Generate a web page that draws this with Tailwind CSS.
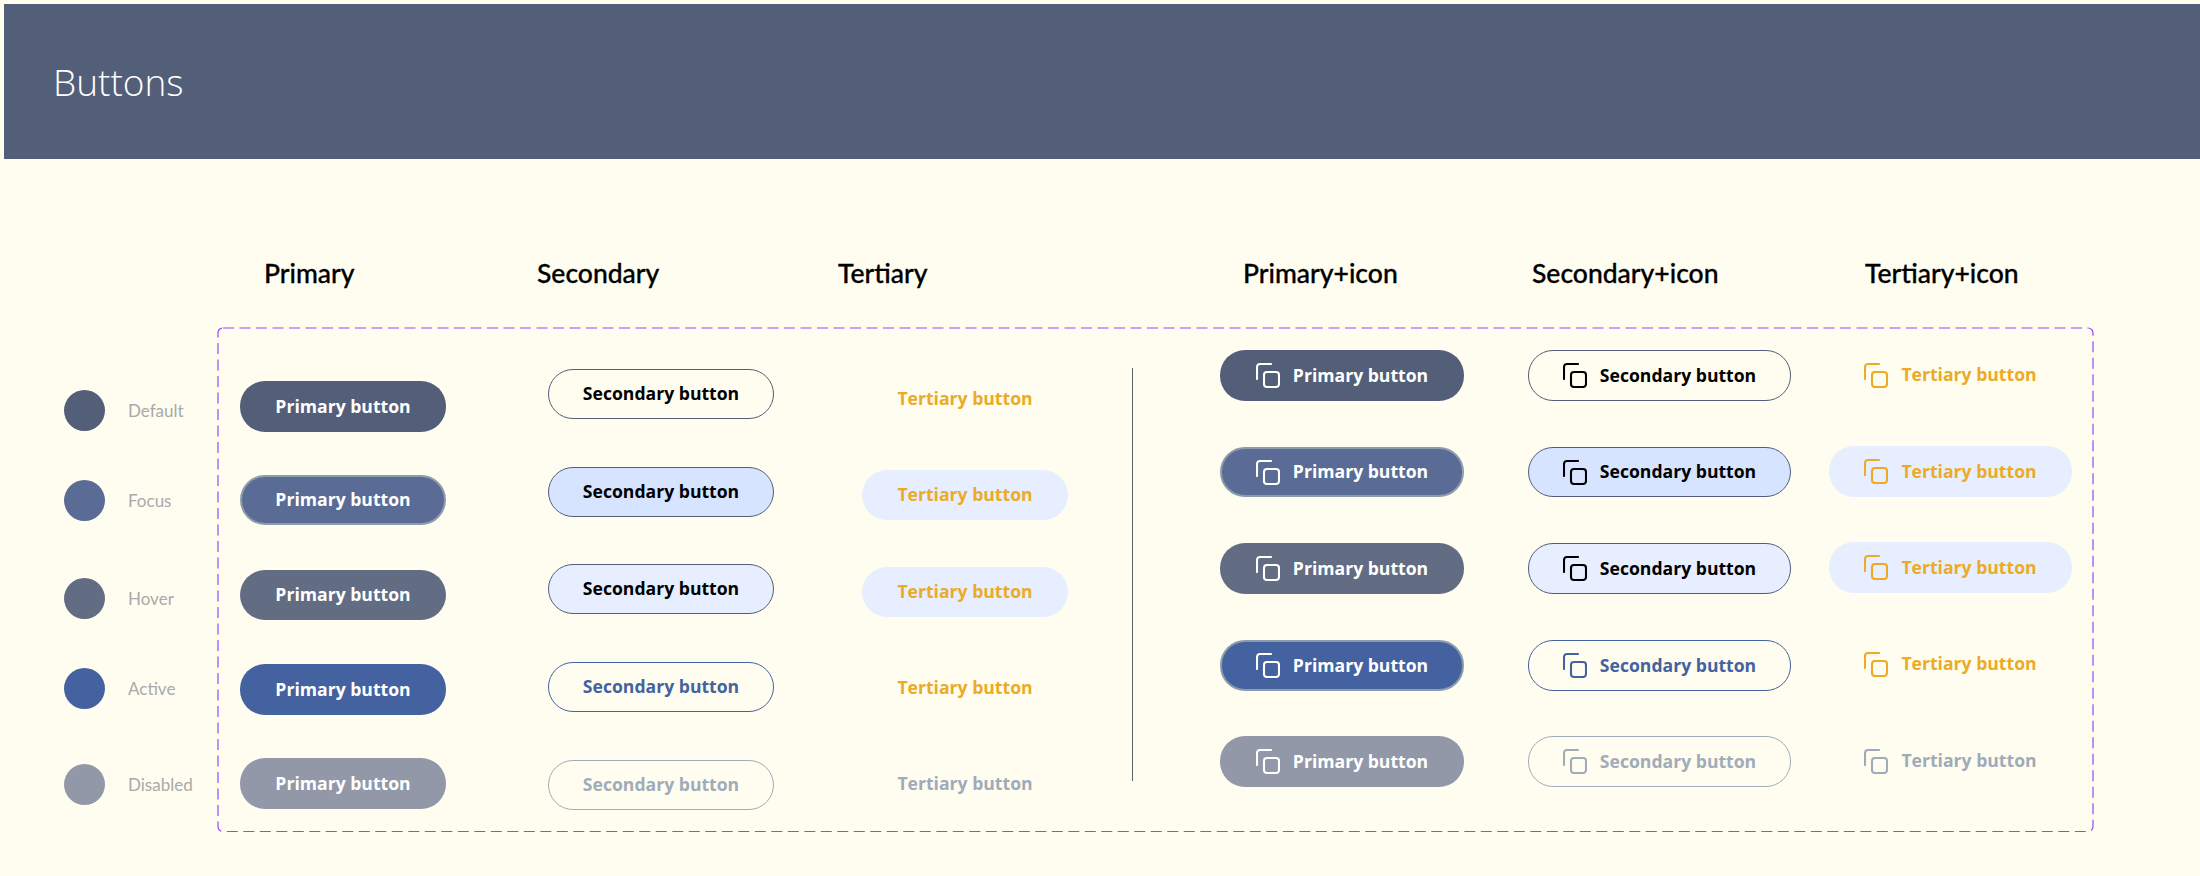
<!DOCTYPE html>
<html lang="en">

<head>
    <meta charset="UTF-8">
    <title>Buttons</title>
    <script src="https://cdn.jsdelivr.net/npm/@tailwindcss/browser@4"></script>
</head>

<body class="bg-[#fffdf0] h-[876px] overflow-hidden pt-[4px] font-['Open_Sans',sans-serif]">
    <svg class="hidden">
        <symbol id="copy" viewBox="0 0 24 25" fill="none" stroke="currentColor" stroke-width="2.1" stroke-linecap="round">
            <path d="M1 16V4a3 3 0 0 1 3-3h11" />
            <rect x="8" y="9" width="15" height="15" rx="3" />
        </symbol>
    </svg>

    <header class="ml-[4px] h-[155px] bg-[#535e78] flex items-center pl-[49px]">
        <h1 class="text-[37px] font-light text-white leading-none">Buttons</h1>
    </header>

    <div class="grid grid-cols-[273px_301px_405px_289px_333px_1fr] h-[168px] pl-[264px] pt-[97px] font-['Lato',sans-serif] font-medium text-[26.5px] leading-[34px] text-black [-webkit-text-stroke:0.3px_black]">
        <span>Primary</span>
        <span>Secondary</span>
        <span>Tertiary</span>
        <span>Primary+icon</span>
        <span>Secondary+icon</span>
        <span>Tertiary+icon</span>
    </div>

    <div class="flex">
        <!-- state legend -->
        <div class="w-[217px] pl-[64px] pt-[63px] flex flex-col font-['Lato',sans-serif] text-[17px] text-[#a9a9a9]">
            <div class="flex items-center gap-[23px]"><span class="size-[41px] rounded-full bg-[#535e78]"></span>Default</div>
            <div class="flex items-center gap-[23px] mt-[49px]"><span class="size-[41px] rounded-full bg-[#5a6c96]"></span>Focus</div>
            <div class="flex items-center gap-[23px] mt-[57px]"><span class="size-[41px] rounded-full bg-[#626c83]"></span>Hover</div>
            <div class="flex items-center gap-[23px] mt-[49px]"><span class="size-[41px] rounded-full bg-[#44629f]"></span>Active</div>
            <div class="flex items-center gap-[23px] mt-[55px]"><span class="size-[41px] rounded-full bg-[#9298a8]"></span>Disabled</div>
        </div>

        <div class="relative w-[1877px] h-[506px] flex text-[17.6px] font-bold">
            <svg class="absolute inset-0 overflow-visible" width="1877" height="506" fill="none">
                <rect x="1" y="1" width="1875" height="503.5" rx="5" stroke="#9747ff" stroke-width="1.2" stroke-dasharray="11 5.5" />
            </svg>

            <!-- primary -->
            <div class="ml-[23px] w-[206px] pt-[54px] flex flex-col text-white *:pb-[1px]">
                <div class="h-[51px] rounded-[25px] bg-[#535e78] flex items-center justify-center">Primary button</div>
                <div class="mt-[43px] h-[50px] rounded-[25px] bg-[#5a6c96] border-2 border-[#8d9cab] flex items-center justify-center">Primary button</div>
                <div class="mt-[45px] h-[50px] rounded-[25px] bg-[#626c83] flex items-center justify-center">Primary button</div>
                <div class="mt-[44px] h-[51px] rounded-[25px] bg-[#44629f] flex items-center justify-center">Primary button</div>
                <div class="mt-[43px] h-[51px] rounded-[25px] bg-[#9298a8] flex items-center justify-center">Primary button</div>
            </div>

            <!-- secondary -->
            <div class="ml-[102px] w-[226px] pt-[42px] flex flex-col text-black *:pb-[1px]">
                <div class="h-[50px] rounded-[25px] border border-[#535e78] flex items-center justify-center">Secondary button</div>
                <div class="mt-[48px] h-[50px] rounded-[25px] border border-[#535e78] bg-[#d6e4ff] flex items-center justify-center">Secondary button</div>
                <div class="mt-[47px] h-[50px] rounded-[25px] border border-[#535e78] bg-[#e6eeff] flex items-center justify-center">Secondary button</div>
                <div class="mt-[48px] h-[50px] rounded-[25px] border border-[#44629f] text-[#44629f] flex items-center justify-center">Secondary button</div>
                <div class="mt-[48px] h-[50px] rounded-[25px] border border-[#a0acb9] text-[#a0acb9] flex items-center justify-center">Secondary button</div>
            </div>

            <!-- tertiary -->
            <div class="ml-[88px] w-[206px] pt-[47px] flex flex-col text-[#ebab27] *:pb-[1px]">
                <div class="h-[50px] rounded-[25px] flex items-center justify-center">Tertiary button</div>
                <div class="mt-[46px] h-[50px] rounded-[25px] bg-[#e6eeff] flex items-center justify-center">Tertiary button</div>
                <div class="mt-[47px] h-[50px] rounded-[25px] bg-[#e6eeff] flex items-center justify-center">Tertiary button</div>
                <div class="mt-[46px] h-[50px] rounded-[25px] flex items-center justify-center">Tertiary button</div>
                <div class="mt-[46px] h-[50px] rounded-[25px] text-[#9fabba] flex items-center justify-center">Tertiary button</div>
            </div>

            <div class="ml-[64px] mt-[41px] w-px h-[413px] bg-[#5c6470]"></div>

            <!-- primary + icon -->
            <div class="ml-[87px] w-[244px] pt-[23px] flex flex-col text-white *:pb-[1px]">
                <div class="h-[51px] rounded-[25px] bg-[#535e78] flex items-center justify-center gap-[13px]"><svg class="w-[24px] h-[25px] mt-[1px]"><use href="#copy" /></svg>Primary button</div>
                <div class="mt-[46px] h-[50px] rounded-[25px] bg-[#5a6c96] border-2 border-[#8d9cab] flex items-center justify-center gap-[13px]"><svg class="w-[24px] h-[25px] mt-[1px]"><use href="#copy" /></svg>Primary button</div>
                <div class="mt-[46px] h-[51px] rounded-[25px] bg-[#626c83] flex items-center justify-center gap-[13px]"><svg class="w-[24px] h-[25px] mt-[1px]"><use href="#copy" /></svg>Primary button</div>
                <div class="mt-[46px] h-[51px] rounded-[25px] bg-[#44629f] border-2 border-[#8d9cab] flex items-center justify-center gap-[13px]"><svg class="w-[24px] h-[25px] mt-[1px]"><use href="#copy" /></svg>Primary button</div>
                <div class="mt-[45px] h-[51px] rounded-[25px] bg-[#9298a8] flex items-center justify-center gap-[13px]"><svg class="w-[24px] h-[25px] mt-[1px]"><use href="#copy" /></svg>Primary button</div>
            </div>

            <!-- secondary + icon -->
            <div class="ml-[64px] w-[263px] pt-[23px] flex flex-col text-black *:pb-[1px]">
                <div class="h-[51px] rounded-[25px] border border-[#535e78] flex items-center justify-center gap-[13px]"><svg class="w-[24px] h-[25px] mt-[1px]"><use href="#copy" /></svg>Secondary button</div>
                <div class="mt-[46px] h-[50px] rounded-[25px] border border-[#535e78] bg-[#d6e4ff] flex items-center justify-center gap-[13px]"><svg class="w-[24px] h-[25px] mt-[1px]"><use href="#copy" /></svg>Secondary button</div>
                <div class="mt-[46px] h-[51px] rounded-[25px] border border-[#535e78] bg-[#e6eeff] flex items-center justify-center gap-[13px]"><svg class="w-[24px] h-[25px] mt-[1px]"><use href="#copy" /></svg>Secondary button</div>
                <div class="mt-[46px] h-[51px] rounded-[25px] border border-[#44629f] text-[#44629f] flex items-center justify-center gap-[13px]"><svg class="w-[24px] h-[25px] mt-[1px]"><use href="#copy" /></svg>Secondary button</div>
                <div class="mt-[45px] h-[51px] rounded-[25px] border border-[#a0acb9] text-[#a0acb9] flex items-center justify-center gap-[13px]"><svg class="w-[24px] h-[25px] mt-[1px]"><use href="#copy" /></svg>Secondary button</div>
            </div>

            <!-- tertiary + icon -->
            <div class="ml-[38px] w-[243px] pt-[23px] flex flex-col text-[#ebab27] *:pb-[1px]">
                <div class="h-[50px] rounded-[25px] flex items-center justify-center gap-[13px]"><svg class="w-[24px] h-[25px] mt-[1px]"><use href="#copy" /></svg>Tertiary button</div>
                <div class="mt-[46px] h-[51px] rounded-[25px] bg-[#e6eeff] flex items-center justify-center gap-[13px]"><svg class="w-[24px] h-[25px] mt-[1px]"><use href="#copy" /></svg>Tertiary button</div>
                <div class="mt-[45px] h-[51px] rounded-[25px] bg-[#e6eeff] flex items-center justify-center gap-[13px]"><svg class="w-[24px] h-[25px] mt-[1px]"><use href="#copy" /></svg>Tertiary button</div>
                <div class="mt-[46px] h-[50px] rounded-[25px] flex items-center justify-center gap-[13px]"><svg class="w-[24px] h-[25px] mt-[1px]"><use href="#copy" /></svg>Tertiary button</div>
                <div class="mt-[47px] h-[50px] rounded-[25px] text-[#9fabba] flex items-center justify-center gap-[13px]"><svg class="w-[24px] h-[25px] mt-[1px]"><use href="#copy" /></svg>Tertiary button</div>
            </div>
        </div>
    </div>
</body>

</html>
